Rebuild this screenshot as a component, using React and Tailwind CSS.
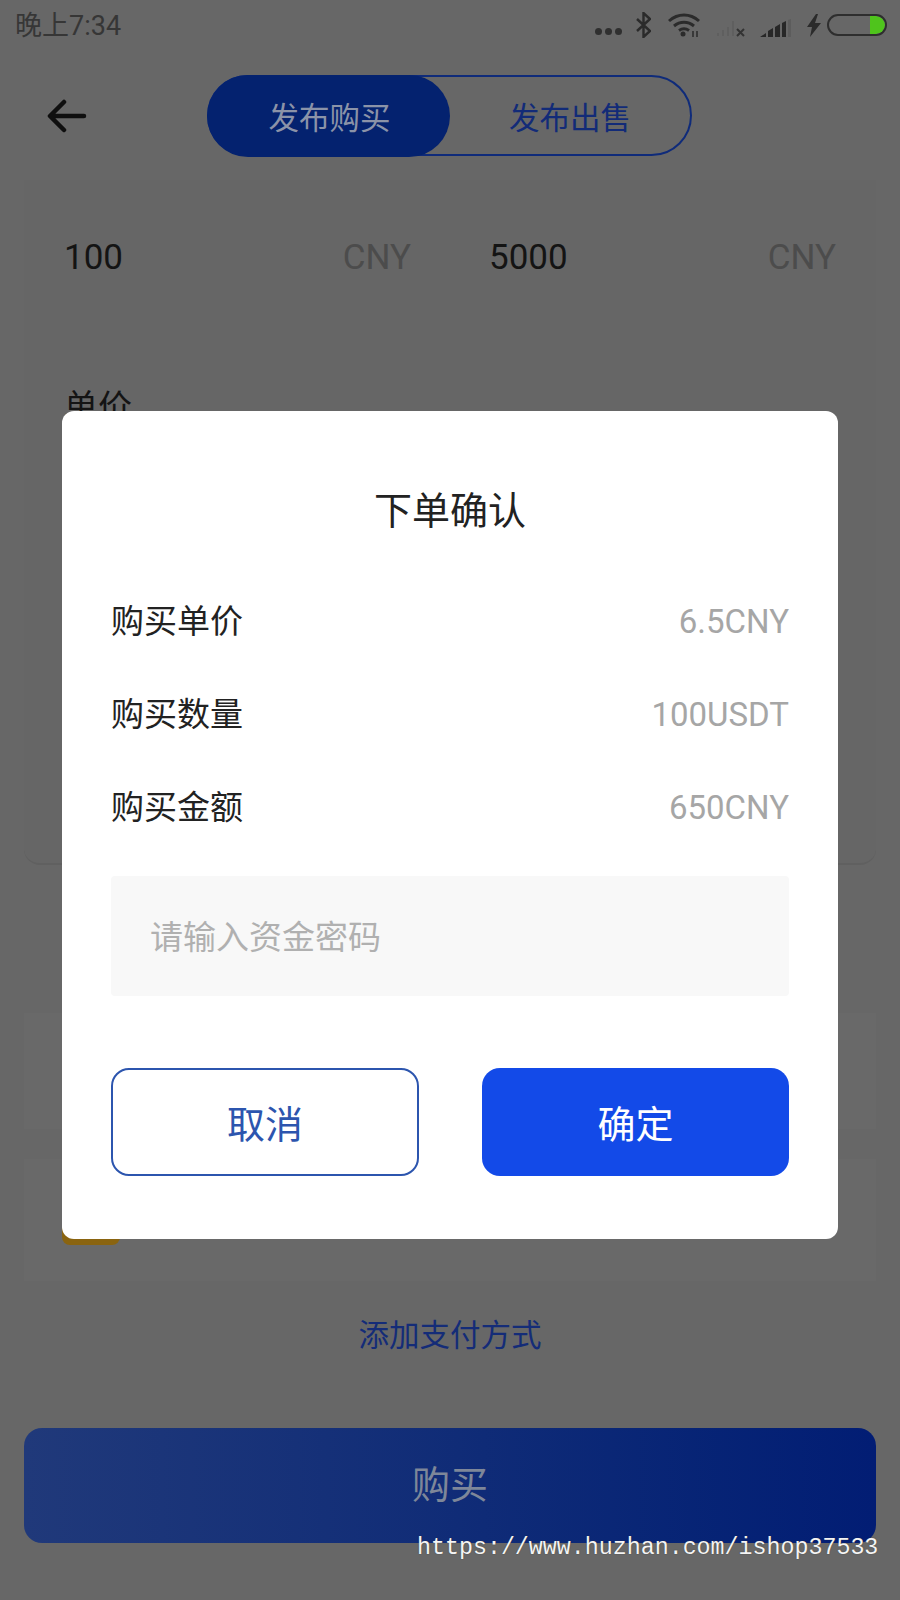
import React from "react";

const CJK = "font-['Roboto','Noto_Sans_CJK_SC',sans-serif]";

const StatusIcons = () => (
  <div className="flex items-center">
    <div className="flex gap-[3px] mt-[12px] mr-[14px]">
      <span className="w-[7px] h-[7px] rounded-full bg-[#2f2f2f]" />
      <span className="w-[7px] h-[7px] rounded-full bg-[#2f2f2f]" />
      <span className="w-[7px] h-[7px] rounded-full bg-[#2f2f2f]" />
    </div>
    <svg width="15" height="26" viewBox="0 0 15 26" fill="none" stroke="#2b2b2b" strokeWidth="2.4" className="mr-[16px]">
      <path d="M1 7l13 12-6.5 6V1L14 7 1 19" />
    </svg>
    <svg width="34" height="24" viewBox="0 0 34 24" fill="none" stroke="#2b2b2b" strokeWidth="3" className="mr-[15px]">
      <path d="M2 8c9-8 21-8 30 0" />
      <path d="M7 13c6-5 14-5 20 0" />
      <path d="M12 17.500c3-2 7-2 10 0" />
      <circle cx="16" cy="21" r="2.500" fill="#2b2b2b" stroke="none" />
      <path d="M26 24v-6M30 24v-6" strokeWidth="1.500" />
    </svg>
    <svg width="30" height="20" viewBox="0 0 30 20" fill="none" className="mr-[14px] mt-[6px]">
      <path d="M1 18h2v-3H1zM6 18h2v-6H6zM11 18h2V9h-2zM16 18h2V3h-2z" fill="#5f5f5f" />
      <path d="M21 11l7 7M28 11l-7 7" stroke="#333" strokeWidth="2" />
    </svg>
    <svg width="32" height="20" viewBox="0 0 32 20" className="mr-[15px] mt-[6px]">
      <path d="M0 19l6-4v4zM8 13l5-3v9H8zM15 9l5-3v13h-5zM22 5l4-2v16h-4z" fill="#272727" />
      <path d="M28 2l3-1v18h-3z" fill="#5c5c5c" />
    </svg>
    <svg width="14" height="23" viewBox="0 0 14 23" className="mr-[6px]">
      <path d="M9 0L0 13h5l-2 10 11-14H8l3-9z" fill="#2b2b2b" />
    </svg>
    <div className="w-[60px] h-[22px] rounded-full border-2 border-[#2e2e2e] flex justify-end overflow-hidden">
      <div className="w-[15px] h-full bg-[#4fc41c] rounded-r-full" />
    </div>
  </div>
);

const BackArrow = () => (
  <svg width="40" height="34" viewBox="0 0 40 34" fill="none" stroke="#0f0f0f" strokeWidth="4.500" strokeLinecap="round" strokeLinejoin="round">
    <path d="M37 17H4M17 3L3 17l14 14" />
  </svg>
);

const InfoRow = ({ label, value }) => (
  <div className="flex justify-between items-center h-[93px] text-[33px]">
    <span className="text-[#222]">{label}</span>
    <span className="text-[#a6a6a6]">{value}</span>
  </div>
);

const App = () => {
  return (
    <div className={`relative w-[900px] h-[1600px] overflow-hidden bg-[#676767] ${CJK}`}>
      {/* page behind the dialog */}
      <div className="flex justify-between items-center h-[50px] pl-[15px] pr-[13px]">
        <span className="text-[27px] leading-none text-[#363636] mt-[2px]">晚上7:34</span>
        <StatusIcons />
      </div>

      <div className="flex items-center h-[81px] mt-[25px] pl-[47px]">
        <BackArrow />
        <div className="flex w-[485px] h-full ml-[120px] rounded-full border-[2.5px] border-[#0f2b7a] text-[30.500px]">
          <div className="w-[243px] pt-[6px] pl-[3px] flex items-center justify-center rounded-full bg-[#04226f] text-[#8b93a8] -m-[2.5px]">发布购买</div>
          <div className="flex-1 pt-[6px] pl-[3px] flex items-center justify-center text-[#122b78]">发布出售</div>
        </div>
      </div>

      <div className="mx-[24px] mt-[24px] h-[685px] pt-[60px] rounded-b-[16px] bg-[#666] border-b-2 border-[#606060]">
        <div className="flex text-[35px] leading-none">
          <div className="w-[387px] pl-[40px] flex justify-between">
            <span className="text-[#141414]">100</span>
            <span className="text-[#4c4c4c]">CNY</span>
          </div>
          <div className="flex-1 pl-[78px] pr-[40px] flex justify-between">
            <span className="text-[#141414]">5000</span>
            <span className="text-[#4c4c4c]">CNY</span>
          </div>
        </div>
        <div className="pl-[40px] mt-[115px] text-[34px] leading-none text-[#141414]">单价</div>
      </div>

      <div className="mx-[24px] mt-[148px] h-[116px] bg-[#696969]" />
      <div className="mx-[24px] mt-[30px] h-[122px] bg-[#696969]" />

      <div className="text-center text-[30.500px] leading-none text-[#142c78] mt-[40px]">添加支付方式</div>

      <div className="mx-[24px] mt-[76px] h-[115px] rounded-[18px] bg-gradient-to-r from-[#20397a] to-[#021d74] flex items-center justify-center text-[38px] text-[#7e8799]">
        购买
      </div>

      {/* gold badge peeking out under the dialog */}
      <div className="absolute left-[62px] top-[1225px] w-[58px] h-[20px] rounded-b-[8px] bg-[#8a6410]" />

      {/* dialog */}
      <div className="absolute left-[62px] top-[411px] w-[776px] h-[828px] rounded-[12px] bg-white px-[49px] pt-[77px]">
        <div className="text-center text-[38px] leading-[46px] text-[#222]">下单确认</div>
        <div className="mt-[41px]">
          <InfoRow label="购买单价" value="6.5CNY" />
          <InfoRow label="购买数量" value="100USDT" />
          <InfoRow label="购买金额" value="650CNY" />
        </div>
        <div className="mt-[22px] h-[120px] pl-[39px] pt-[4px] flex items-center bg-[#f8f8f8] rounded-[4px] text-[33px] text-[#b0b0b0]">
          请输入资金密码
        </div>
        <div className="flex justify-between mt-[72px]">
          <button className="w-[308px] h-[108px] pt-[6px] rounded-[18px] border-[2.5px] border-[#2c55ae] bg-white text-[38px] text-[#2c55ae]">取消</button>
          <button className="w-[307px] h-[108px] pt-[6px] rounded-[18px] bg-[#134ae8] text-[38px] text-white">确定</button>
        </div>
      </div>

      <div className="absolute left-[417px] top-[1536px] font-['Liberation_Mono',monospace] text-[23.300px] leading-[24px] text-[#f4f4f4] whitespace-nowrap [text-shadow:0_0_1px_#333]">
        https://www.huzhan.com/ishop37533
      </div>
    </div>
  );
};

export default App;
